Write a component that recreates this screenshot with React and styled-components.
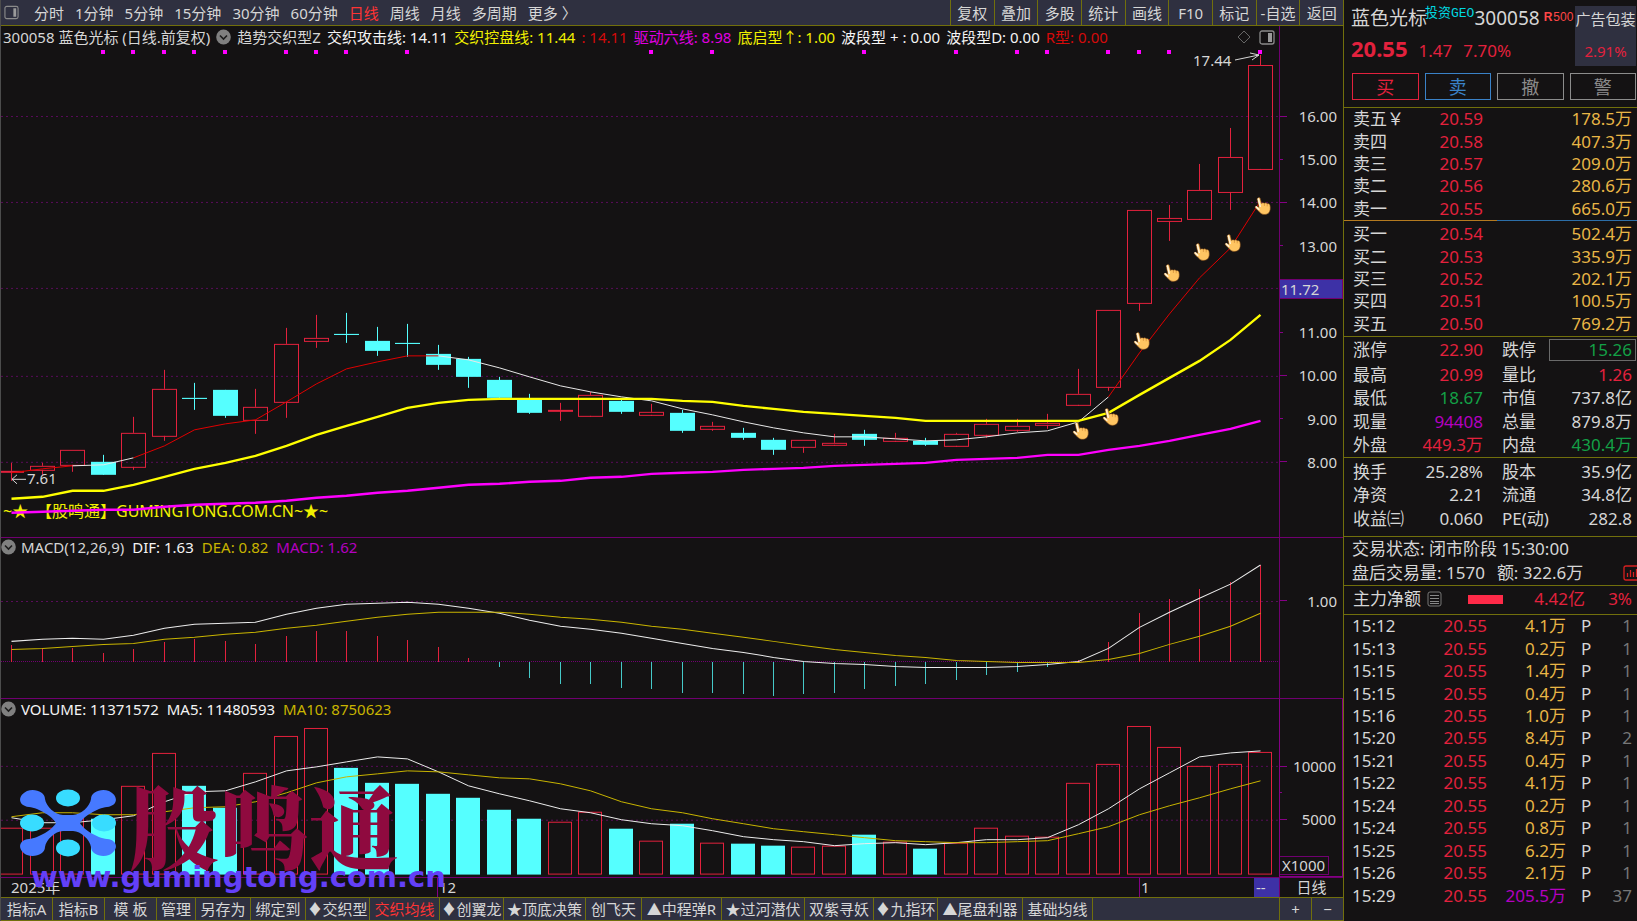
import React from "react";
import styled, { createGlobalStyle, css } from "styled-components";

const c = {
  bg: "#141213",
  bar: "#2f3040",
  olive: "#716f0c",
  purple: "#700070",
  grid: "#5a0c5a",
  text: "#d6d6d6",
  white: "#f4f4f4",
  red: "#e3213d",
  pureRed: "#d40a0a",
  green: "#13a046",
  gold: "#e9b646",
  yellow: "#ffff00",
  darkYellow: "#c8b400",
  magenta: "#ff00ff",
  violet: "#b400c0",
  cyan: "#55ffff",
  blue: "#3a82c8",
  badge: "#3d31a6",
};

const GlobalStyle = createGlobalStyle`
  * { box-sizing: border-box; }
  html, body { margin: 0; height: 100%; background: ${c.bg}; }
  #root { height: 100%; }
  body {
    font-family: "Noto Sans", "Noto Sans CJK SC", sans-serif;
    font-size: 15px;
    line-height: 20px;
    color: ${c.text};
    overflow: hidden;
  }
  button { font: inherit; color: inherit; background: none; border: 0; padding: 0; margin: 0; cursor: pointer; white-space: nowrap; }
`;

const Screen = styled.div`
  display: flex;
  height: 100vh;
`;

const Workspace = styled.main`
  position: relative;
  display: flex;
  flex-direction: column;
  flex: 1;
  min-width: 0;
  border-left: 1px solid #4c4c4c;
`;

/* top tool bar */

const Toolbar = styled.header`
  display: flex;
  flex: 0 0 26px;
  justify-content: space-between;
  background: ${c.bar};
  border-bottom: 1px solid ${c.olive};
`;

const Periods = styled.nav`
  display: flex;
  align-items: center;
  gap: 11px;
  padding-left: 3px;
  white-space: nowrap;
`;

const PeriodButton = styled.button`
  color: ${(p) => (p.$active ? "#ff3434" : c.text)};
`;

const MenuIcon = styled.svg`
  margin-right: 4px;
`;

const Tools = styled.div`
  display: grid;
  grid-template-columns: repeat(9, 1fr);
  flex: 0 0 393px;
`;

const ToolButton = styled.button`
  border-left: 1px solid ${c.olive};
  overflow: hidden;
`;

/* chart panes */

const Pane = styled.section`
  display: flex;
  flex: ${(p) => p.$share} 1 0;
  min-height: 0;
  ${(p) => p.$line && css`border-bottom: 1px solid ${c.purple};`}
`;

const Plot = styled.div`
  display: flex;
  flex-direction: column;
  flex: 1;
  min-width: 0;
`;

const Legend = styled.div`
  display: flex;
  align-items: center;
  gap: 6px;
  flex: 0 0 22px;
  padding: 0 4px 0 2px;
  line-height: 18px;
  white-space: nowrap;
`;

const SubLegend = styled(Legend)`
  gap: 8px;
  flex-basis: ${(p) => p.$height}px;
  padding-left: 0;
  svg { margin-right: -3px; }
`;

const Series = styled.span`
  color: ${(p) => p.$color || c.text};
`;

const LegendTools = styled.div`
  display: flex;
  align-items: center;
  gap: 8px;
  margin-left: auto;
`;

const Chart = styled.svg`
  display: block;
  flex: 1 1 0;
  width: 100%;
  min-height: 0;
  font-size: 15px;
`;

const SiteText = styled.text`
  font-size: 16px;
  fill: #f0f000;
`;

const Axis = styled.div`
  display: flex;
  flex-direction: column;
  flex: 0 0 64px;
  border-left: 1px solid ${c.purple};
`;

const PriceAxis = styled(Axis)`
  justify-content: space-between;
  padding: 80px 0 65px;
`;

const MacdAxis = styled(Axis)`
  padding-top: 53px;
`;

const VolumeAxis = styled(Axis)`
  gap: 16px;
  padding: 57px 0 1px;
  border: 1px solid #850085;
  border-top: 0;
`;

const AxisLabel = styled.div`
  display: flex;
  align-items: center;
  justify-content: space-between;
  padding-right: 6px;
  &::before {
    content: "";
    width: ${(p) => (p.$minor ? 3 : 7)}px;
    height: 1px;
    background: #850085;
  }
`;

const MinorTick = styled.div`
  width: 2px;
  height: 1px;
  background: #850085;
`;

const PriceBadge = styled.div`
  padding-left: 1px;
  background: ${c.badge};
  border: 1px solid ${c.purple};
  border-left: 0;
  line-height: 18px;
`;

const UnitBox = styled.div`
  align-self: flex-start;
  margin-top: auto;
  padding: 0 3px 0 2px;
  border: 1px solid ${c.purple};
  border-left: 0;
  line-height: 17px;
`;

const DateRow = styled.div`
  display: grid;
  grid-template-columns: 436fr 702fr 115fr 25px 64px;
  flex: 0 0 20px;
  border-top: 1px solid ${c.purple};
  line-height: 18px;
`;

const DateCell = styled.div`
  padding-left: ${(p) => (p.$first ? 10 : 1)}px;
  border-left: ${(p) => (p.$first ? 0 : 1)}px solid #850085;
`;

const CursorCell = styled.div`
  padding-left: 2px;
  background: ${c.badge};
`;

const PeriodCell = styled.div`
  border-left: 1px solid ${c.purple};
  text-align: center;
`;

/* bottom tabs */

const TabBar = styled.footer`
  display: flex;
  flex: 0 0 24px;
  background: ${c.bar};
  border-top: 1px solid ${c.olive};
  border-bottom: 1px solid ${c.olive};
`;

const Tab = styled.button`
  flex: 0 0 ${(p) => p.$width}px;
  border-right: 1px solid ${c.olive};
  color: ${(p) => (p.$active ? "#ff3434" : c.text)};
  overflow: hidden;
`;

const ZoomButtons = styled.div`
  display: grid;
  grid-template-columns: 1fr 1fr;
  flex: 0 0 64px;
  margin-left: auto;
`;

const ZoomButton = styled.button`
  border-left: 1px solid ${c.olive};
`;

/* watermark laid over the volume pane */

const Watermark = styled.div`
  position: absolute;
  left: 18px;
  bottom: 26px;
  pointer-events: none;
`;

const WatermarkBrand = styled.div`
  display: flex;
  align-items: center;
  gap: 12px;
  height: 72px;
`;

const WatermarkName = styled.span`
  font-family: "Noto Serif CJK SC", "Noto Sans CJK SC", serif;
  font-size: 90px;
  font-weight: 900;
  line-height: 72px;
  color: #8f0a3f;
`;

const WatermarkSite = styled.div`
  padding-left: 12px;
  font-family: "DejaVu Sans", sans-serif;
  font-size: 29px;
  font-weight: 700;
  line-height: 36px;
  color: #6340f8;
`;

/* quote panel */

const Quote = styled.aside`
  flex: 0 0 294px;
  border-left: 1px solid ${c.olive};
  font-size: 17px;
  line-height: 22px;
  overflow: hidden;
`;

const Block = styled.section`
  border-bottom: 1px solid ${c.olive};
`;

const QuoteHead = styled(Block)`
  height: 108px;
  padding: 6px 1px 0 8px;
`;

const HeadTop = styled.div`
  display: flex;
  justify-content: space-between;
  height: 60px;
`;

const HeadInfo = styled.div`
  flex: 1;
  min-width: 0;
  margin-left: -1px;
`;

const NameLine = styled.div`
  display: flex;
  height: 26px;
  font-size: 19px;
  line-height: 24px;
  white-space: nowrap;
`;

const Topic = styled.span`
  margin-left: -2px;
  font-family: "Liberation Mono", "Noto Sans CJK SC", monospace;
  font-size: 13px;
  line-height: 16px;
  color: #00d8e0;
`;

const Flag = styled.span`
  margin-left: ${(p) => (p.$bold ? 4 : 1)}px;
  font-family: "Liberation Sans", sans-serif;
  font-size: 12px;
  font-weight: ${(p) => (p.$bold ? 700 : 400)};
  line-height: 22px;
  color: #ff4646;
`;

const PriceLine = styled.div`
  display: flex;
  align-items: baseline;
  gap: 11px;
  padding-top: 3px;
  line-height: 26px;
  color: ${c.red};
`;

const LastPrice = styled.strong`
  font-size: 22px;
`;

const Sector = styled.div`
  display: flex;
  flex-direction: column;
  justify-content: space-between;
  flex: 0 0 61px;
  padding: 2px 0 4px;
  background: ${c.bar};
  font-size: 15px;
  text-align: center;
  white-space: nowrap;
`;

const SectorChange = styled.span`
  color: ${c.red};
`;

const Actions = styled.div`
  display: grid;
  grid-template-columns: repeat(4, 1fr);
  gap: 6px;
  padding-top: 7px;
`;

const ActionButton = styled.button`
  height: 27px;
  border: 1px solid ${(p) => p.$color};
  color: ${(p) => p.$color};
  font-size: 18px;
  line-height: 22px;
`;

const SplitLine = styled.div`
  height: 1px;
  background: linear-gradient(90deg, #b47a20 0 153px, #2c6ea8 153px);
`;

const Table = styled.table`
  width: 100%;
  height: ${(p) => p.$height}px;
  border-collapse: collapse;
  table-layout: fixed;
  line-height: 20px;
  th, td { padding: 0; font-weight: 400; white-space: nowrap; }
  th { text-align: left; padding-left: ${(p) => p.$indent || 0}px; }
`;

const Col = styled.col`
  width: ${(p) => p.$w}px;
`;

const Num = styled.td`
  text-align: right;
  color: ${(p) => p.$color || c.text};
`;

const EdgeNum = styled(Num)`
  && { padding-right: 5px; }
`;

const StatLabel = styled.th`
  && { padding-left: 19px; }
`;

const Mark = styled.td`
  && { padding-left: 15px; }
`;

const Boxed = styled.div`
  margin: 0 -4px 0 6px;
  padding-right: 3px;
  border: 1px solid #6a6a6a;
  line-height: 20px;
`;

const Padded = styled.div`
  padding: ${(p) => p.$pad};
`;

const StatusLine = styled.div`
  display: flex;
  align-items: center;
  gap: 12px;
  height: 24px;
  padding-left: 8px;
  white-space: nowrap;
`;

const EdgeIcon = styled.svg`
  margin-left: auto;
`;

const FlowLine = styled.div`
  display: flex;
  align-items: center;
  height: 28px;
  padding: 0 5px 2px 9px;
  color: ${c.red};
  white-space: nowrap;
`;

const FlowLabel = styled.span`
  margin-right: 6px;
  color: ${c.text};
`;

const FlowBar = styled.div`
  width: 35px;
  height: 9px;
  margin-left: 26px;
  background: #ff2a48;
`;

const FlowValue = styled.span`
  flex: 0 0 ${(p) => p.$width}px;
  text-align: right;
`;

/* data: chart ordinates share one vertical scale, one entry per trading day */

const dayX = (i) => Math.round(11.4 + (i * 1249) / 41);

// [up, body top, body bottom, high, low]
const candles = [
  [1, 471, 472, 463, 480], [1, 466, 470, 463, 474], [1, 450, 465, 450, 471], [0, 462, 474, 455, 474],
  [1, 433, 467, 417, 469], [1, 389, 436, 370, 440], [0, 398, 398, 383, 409], [0, 390, 415, 390, 417],
  [1, 407, 420, 389, 433], [1, 344, 402, 328, 417], [1, 338, 341, 315, 347], [0, 334, 334, 313, 342],
  [0, 341, 350, 327, 355], [0, 343, 343, 324, 356], [0, 354, 364, 345, 369], [0, 359, 376, 357, 387],
  [0, 380, 397, 377, 399], [0, 400, 412, 394, 413], [1, 410, 411, 403, 420], [1, 395, 416, 392, 416],
  [0, 401, 411, 400, 413], [1, 412, 415, 404, 415], [0, 413, 430, 410, 432], [1, 426, 429, 422, 430],
  [0, 433, 437, 428, 439], [0, 440, 449, 438, 454], [1, 440, 447, 440, 452], [1, 443, 445, 434, 445],
  [0, 434, 439, 430, 445], [1, 438, 441, 433, 441], [0, 441, 444, 438, 445], [1, 434, 446, 433, 446],
  [1, 424, 435, 419, 437], [1, 426, 430, 419, 431], [1, 423, 425, 414, 428], [1, 394, 405, 369, 405],
  [1, 310, 387, 310, 390], [1, 210, 303, 210, 310], [1, 218, 221, 205, 240], [1, 190, 219, 164, 219],
  [1, 157, 192, 128, 209], [1, 65, 169, 55, 169],
];

const attack = [473, 469, 466, 465, 458, 446, 430, 424, 420, 402, 384, 369, 362, 356, 356, 360, 368, 377, 386, 392, 397, 401, 409, 415, 422, 428, 433, 437, 437, 439, 441, 440, 437, 433, 431, 422, 397, 353, 314, 278, 248, 201];
const control = [499, 497, 491, 491, 485, 477, 469, 463, 456, 446, 435, 426, 417, 408, 403, 400, 399, 399, 399, 399, 399, 399, 401, 402, 406, 409, 412, 414, 416, 418, 421, 421, 421, 421, 421, 421, 413, 395, 378, 361, 340, 315];
const sixth = [513, 512, 511, 510, 510, 507, 505, 504, 503, 501, 498, 496, 493, 491, 488, 485, 484, 482, 481, 478, 477, 474, 473, 472, 470, 469, 468, 466, 465, 464, 463, 460, 459, 458, 455, 455, 450, 446, 441, 435, 429, 421];
const signals = [3, 4, 5, 6, 7, 9, 10, 11, 13, 21, 23, 28, 31, 33, 34, 36, 37, 38, 41];
const hands = [[35, 431], [36, 417], [37, 341], [38, 273], [39, 252], [40, 243], [41, 206]];

const dif = [641, 639, 638, 639, 635, 628, 624, 623, 622, 614, 608, 604, 603, 602, 604, 608, 613, 620, 626, 629, 633, 638, 643, 648, 652, 657, 661, 663, 664, 666, 667, 667, 667, 666, 664, 661, 648, 627, 612, 598, 584, 565];
const dea = [649, 648, 646, 644, 643, 639, 637, 634, 632, 628, 625, 621, 617, 614, 612, 612, 612, 614, 617, 619, 622, 626, 629, 633, 637, 641, 645, 649, 652, 655, 657, 660, 661, 662, 662, 662, 659, 653, 644, 636, 626, 613];
const macd = [645, 648, 648, 653, 649, 642, 639, 641, 644, 636, 631, 631, 636, 640, 647, 658, 667, 677, 683, 683, 687, 688, 692, 692, 693, 695, 693, 692, 688, 685, 683, 679, 674, 671, 667, 660, 642, 613, 599, 589, 582, 565];

const volume = [828, 828, 817, 819, 786, 753, 786, 808, 773, 736, 728, 768, 783, 784, 794, 798, 810, 819, 822, 812, 829, 841, 824, 843, 844, 846, 847, 846, 835, 842, 849, 843, 828, 836, 837, 783, 764, 726, 747, 766, 764, 752];
const ma5 = [818, 823, 823, 820, 816, 802, 792, 791, 782, 771, 767, 762, 757, 759, 772, 786, 794, 801, 809, 813, 820, 824, 826, 831, 837, 840, 842, 846, 844, 843, 845, 843, 840, 840, 838, 825, 809, 789, 773, 757, 753, 751];
const ma10 = [817, 813, 813, 815, 815, 812, 808, 807, 802, 793, 783, 777, 774, 771, 772, 775, 778, 779, 784, 791, 802, 809, 813, 819, 824, 829, 832, 835, 838, 841, 842, 843, 843, 842, 841, 834, 827, 815, 806, 798, 789, 781];

const periods = ["分时", "1分钟", "5分钟", "15分钟", "30分钟", "60分钟", "日线", "周线", "月线", "多周期", "更多 〉"];
const tools = ["复权", "叠加", "多股", "统计", "画线", "F10", "标记", "-自选", "返回"];
const tabs = [
  ["指标A", 52], ["指标B", 52], ["模 板", 52], ["管理", 39], ["另存为", 55], ["绑定到", 55], ["♦交织型", 64],
  ["交织均线", 70], ["♦创翼龙", 64], ["★顶底决策", 82], ["创飞天", 56], ["▲中程弹R", 80], ["★过河潜伏", 83],
  ["双紫寻妖", 69], ["♦九指环", 64], ["▲尾盘利器", 85], ["基础均线", 70],
];

const asks = [["卖五￥", "20.59", "178.5万"], ["卖四", "20.58", "407.3万"], ["卖三", "20.57", "209.0万"], ["卖二", "20.56", "280.6万"], ["卖一", "20.55", "665.0万"]];
const bids = [["买一", "20.54", "502.4万"], ["买二", "20.53", "335.9万"], ["买三", "20.52", "202.1万"], ["买四", "20.51", "100.5万"], ["买五", "20.50", "769.2万"]];

const stats = [
  ["涨停", "22.90", c.red, "跌停", "15.26", c.green, true],
  ["最高", "20.99", c.red, "量比", "1.26", c.red],
  ["最低", "18.67", c.green, "市值", "737.8亿"],
  ["现量", "94408", c.violet, "总量", "879.8万"],
  ["外盘", "449.3万", c.red, "内盘", "430.4万", c.green],
].map(([a, b, bc, d, e, ec, box]) => ({ a, b, bc, d, e, ec, box }));

const basics = [
  { a: "换手", b: "25.28%", d: "股本", e: "35.9亿" },
  { a: "净资", b: "2.21", d: "流通", e: "34.8亿" },
  { a: "收益㈢", b: "0.060", d: "PE(动)", e: "282.8" },
];

const trades = [
  ["15:12", "4.1万", 1], ["15:13", "0.2万", 1], ["15:15", "1.4万", 1], ["15:15", "0.4万", 1], ["15:16", "1.0万", 1],
  ["15:20", "8.4万", 2], ["15:21", "0.4万", 1], ["15:22", "4.1万", 1], ["15:24", "0.2万", 1], ["15:24", "0.8万", 1],
  ["15:25", "6.2万", 1], ["15:26", "2.1万", 1], ["15:29", "205.5万", 37],
];

/* chart parts */

const Line = ({ data, from = 0, to = data.length - 1, color, width = 1 }) => (
  <polyline
    fill="none"
    stroke={color}
    strokeWidth={width}
    points={data.slice(from, to + 1).map((y, k) => `${dayX(from + k) + 0.5},${y}`).join(" ")}
  />
);

const GridLine = ({ y, dash = "2 3", color = c.grid }) => (
  <line x1="1" x2="1279" y1={y - 0.5} y2={y - 0.5} stroke={color} strokeDasharray={dash} shapeRendering="crispEdges" />
);

const Candle = ({ i, d: [up, top, bottom, high, low] }) => {
  const x = dayX(i);
  const color = up ? c.red : c.cyan;
  return (
    <g stroke={color} shapeRendering="crispEdges">
      <path d={`M${x + 0.5} ${high}V${up ? top : bottom}M${x + 0.5} ${bottom}V${low + 1}`} />
      <rect x={x - 11.5} y={top + 0.5} width="24" height={Math.max(bottom - top, 0.1)} fill={up ? "none" : color} />
    </g>
  );
};

const Hand = ({ x, y }) => (
  <g transform={`translate(${x} ${y})`}>
    <path
      d="M-5 -8C-3.8 -8.8 -2.8 -8 -2.6 -7L-1.6 -2.6C-.6 -3.4 .8 -3.4 1.4 -2.6C2.4 -3.4 3.6 -3.2 4.2 -2.2C5.4 -2.8 6.8 -2 7 -.6C7.6 2 7.6 5 5.6 7.2C3 9.2 -.8 8.8 -2.6 7C-4.6 5 -6.6 3.4 -7.8 1.6C-8 0 -6.4 -.4 -4.6 1.4L-4.2 .6L-5.8 -6.4C-6 -7.2 -5.6 -7.8 -5 -8Z"
      fill="#ffc562"
      stroke="#6b3a12"
      strokeWidth=".6"
    />
    <path d="M-4.6 -7L-2.8 .4M-6.8 1L-4.2 3.4" stroke="#fff2d8" strokeWidth="1.6" strokeLinecap="round" />
    <path d="M1.4 -2.4V0M4.2 -2V.4" stroke="#d08a34" strokeWidth=".7" />
  </g>
);

const Toggle = () => (
  <svg width="15" height="16" viewBox="0 0 15 16" aria-hidden="true">
    <ellipse cx="7.5" cy="8" rx="7.3" ry="7.5" fill="#808080" />
    <path d="M4 6.5L7.5 10L11 6.5" fill="none" stroke="#1c1c1c" strokeWidth="1.6" />
  </svg>
);

const PanelIcon = () => (
  <svg width="16" height="15" viewBox="0 0 16 15" aria-hidden="true">
    <rect x="1" y="1" width="14" height="13" rx="2" fill="none" stroke="#8a8a8a" strokeWidth="1.3" />
    <rect x="9" y="3" width="4" height="9" fill="#9a9a9a" />
  </svg>
);

const Logo = () => (
  <svg width="98" height="68" viewBox="0 0 98 68" aria-hidden="true">
    <path
      d="M8 2C16 -1 26 3 26 10C27 17 36 26 44 26H54C62 26 71 17 72 10C72 3 82 -1 90 2C100 7 99 17 88 18C78 19 64 28 61 34C64 40 78 49 88 50C99 51 100 61 90 66C82 69 72 65 72 58C71 51 62 42 54 42H44C36 42 27 51 26 58C26 65 16 69 8 66C-2 61 -1 51 10 50C20 49 34 40 37 34C34 28 20 19 10 18C-1 17 -2 7 8 2Z"
      fill="#4679ff"
    />
    <g fill="#38dcff">
      <ellipse cx="49" cy="9" rx="12" ry="8.5" />
      <ellipse cx="49" cy="59" rx="12" ry="8.5" />
      <ellipse cx="13" cy="34" rx="12" ry="8.5" />
      <ellipse cx="85" cy="34" rx="12" ry="8.5" />
    </g>
  </svg>
);

const OrderTable = ({ rows }) => (
  <Table $height={112} $indent={9}>
    <colgroup><Col $w={75} /><Col $w={64} /><Col /></colgroup>
    <tbody>
      {rows.map(([label, price, amount]) => (
        <tr key={label}>
          <th scope="row">{label}</th>
          <Num $color={c.red}>{price}</Num>
          <EdgeNum $color={c.gold}>{amount}</EdgeNum>
        </tr>
      ))}
    </tbody>
  </Table>
);

const StatTable = ({ rows, height }) => (
  <Table $height={height} $indent={9}>
    <colgroup><Col $w={66} /><Col $w={73} /><Col $w={60} /><Col /></colgroup>
    <tbody>
      {rows.map((r) => (
        <tr key={r.a}>
          <th scope="row">{r.a}</th>
          <Num $color={r.bc}>{r.b}</Num>
          <StatLabel scope="row">{r.d}</StatLabel>
          <EdgeNum $color={r.ec}>{r.box ? <Boxed>{r.e}</Boxed> : r.e}</EdgeNum>
        </tr>
      ))}
    </tbody>
  </Table>
);

export default function App() {
  return (
    <>
      <GlobalStyle />
      <Screen>
        <Workspace>
          <Toolbar>
            <Periods>
              <MenuIcon width="15" height="15" viewBox="0 0 16 15" aria-hidden="true">
                <rect x="1" y="1" width="14" height="13" rx="2" fill="none" stroke="#8a8a8a" strokeWidth="1.2" />
                <rect x="10" y="3" width="3" height="9" fill="#9a9a9a" />
              </MenuIcon>
              {periods.map((p) => <PeriodButton key={p} $active={p === "日线"}>{p}</PeriodButton>)}
            </Periods>
            <Tools>{tools.map((t) => <ToolButton key={t}>{t}</ToolButton>)}</Tools>
          </Toolbar>

          <Pane $share={512} $line>
            <Plot>
              <Legend>
                <Series>300058 蓝色光标 (日线.前复权)</Series>
                <Toggle />
                <Series>趋势交织型Z</Series>
                <Series $color={c.white}>交织攻击线: 14.11</Series>
                <Series $color="#f0f000">交织控盘线: 11.44</Series>
                <Series $color={c.pureRed}>: 14.11</Series>
                <Series $color="#e000e0">驱动六线: 8.98</Series>
                <Series $color="#f0f000">底启型↑: 1.00</Series>
                <Series $color={c.white}>波段型 + : 0.00</Series>
                <Series $color={c.white}>波段型D: 0.00</Series>
                <Series $color={c.pureRed}>R型: 0.00</Series>
                <LegendTools>
                  <svg width="14" height="14" viewBox="0 0 14 14" aria-hidden="true">
                    <path d="M7 1L13 7L7 13L1 7Z" fill="none" stroke="#666" />
                  </svg>
                  <PanelIcon />
                </LegendTools>
              </Legend>
              <Chart viewBox="1 48 1278 489" preserveAspectRatio="none">
                {[117, 203, 289, 377, 463].map((y) => <GridLine key={y} y={y} />)}
                {candles.map((d, i) => <Candle key={i} i={i} d={d} />)}
                <SiteText x="3" y="517">~★　【股鸣通】GUMINGTONG.COM.CN~★~</SiteText>
                <Line data={sixth} color={c.magenta} width={2.4} />
                <Line data={attack} to={2} color="#e00000" />
                <Line data={attack} from={2} to={4} color="#e8e8e8" />
                <Line data={attack} from={4} to={14} color="#e00000" />
                <Line data={attack} from={14} to={36} color="#e8e8e8" />
                <Line data={attack} from={36} color="#e00000" />
                <Line data={control} color={c.yellow} width={2.4} />
                {signals.map((i) => <rect key={i} x={dayX(i) - 2} y="50" width="4" height="4" fill={c.magenta} />)}
                <text x="1193" y="66" fill={c.text}>17.44</text>
                <path d="M1235 60L1259 55M1250 53L1259 55L1252 60" fill="none" stroke={c.text} />
                <text x="27" y="484" fill={c.text}>7.61</text>
                <path d="M12 479.5H26M17 475L12 479.5L17 484" fill="none" stroke={c.text} />
                {hands.map(([i, y]) => <Hand key={i} x={dayX(i) + 3} y={y} />)}
              </Chart>
            </Plot>
            <PriceAxis>
              <AxisLabel>16.00</AxisLabel>
              <AxisLabel $minor>15.00</AxisLabel>
              <AxisLabel>14.00</AxisLabel>
              <AxisLabel $minor>13.00</AxisLabel>
              <PriceBadge>11.72</PriceBadge>
              <AxisLabel $minor>11.00</AxisLabel>
              <AxisLabel>10.00</AxisLabel>
              <AxisLabel $minor>9.00</AxisLabel>
              <AxisLabel>8.00</AxisLabel>
            </PriceAxis>
          </Pane>

          <Pane $share={161} $line>
            <Plot>
              <SubLegend $height={18}>
                <Toggle />
                <Series>MACD(12,26,9)</Series>
                <Series $color={c.white}>DIF: 1.63</Series>
                <Series $color={c.darkYellow}>DEA: 0.82</Series>
                <Series $color={c.violet}>MACD: 1.62</Series>
              </SubLegend>
              <Chart viewBox="1 556 1278 142" preserveAspectRatio="none">
                <GridLine y={602} />
                <GridLine y={662} dash="1 1" color={c.purple} />
                {macd.map((y, i) => (
                  <path key={i} d={`M${dayX(i) + 0.5} 662V${y}`} stroke={y < 662 ? c.red : "#45c8c8"} shapeRendering="crispEdges" />
                ))}
                <Line data={dif} color="#ececec" />
                <Line data={dea} color={c.darkYellow} />
              </Chart>
            </Plot>
            <MacdAxis><AxisLabel>1.00</AxisLabel></MacdAxis>
          </Pane>

          <Pane $share={178}>
            <Plot>
              <SubLegend $height={20}>
                <Toggle />
                <Series $color={c.white}>VOLUME: 11371572</Series>
                <Series $color={c.white}>MA5: 11480593</Series>
                <Series $color={c.darkYellow}>MA10: 8750623</Series>
              </SubLegend>
              <Chart viewBox="1 719 1278 158" preserveAspectRatio="none">
                <GridLine y={767} />
                <GridLine y={821} />
                {volume.map((y, i) => (
                  <rect
                    key={i}
                    x={dayX(i) - 11.5}
                    y={y + 0.5}
                    width="23"
                    height={874 - y}
                    fill={candles[i][0] ? "none" : c.cyan}
                    stroke={candles[i][0] ? c.red : c.cyan}
                    shapeRendering="crispEdges"
                  />
                ))}
                <Line data={ma5} color="#ececec" />
                <Line data={ma10} color={c.darkYellow} />
              </Chart>
            </Plot>
            <VolumeAxis>
              <AxisLabel>10000</AxisLabel>
              <MinorTick />
              <AxisLabel>5000</AxisLabel>
              <UnitBox>X1000</UnitBox>
            </VolumeAxis>
          </Pane>

          <DateRow>
            <DateCell $first>2025年</DateCell>
            <DateCell>12</DateCell>
            <DateCell>1</DateCell>
            <CursorCell>--</CursorCell>
            <PeriodCell>日线</PeriodCell>
          </DateRow>

          <TabBar>
            {tabs.map(([label, width]) => (
              <Tab key={label} $width={width} $active={label === "交织均线"}>{label}</Tab>
            ))}
            <ZoomButtons>
              <ZoomButton>+</ZoomButton>
              <ZoomButton>−</ZoomButton>
            </ZoomButtons>
          </TabBar>

          <Watermark>
            <WatermarkBrand>
              <Logo />
              <WatermarkName>股鸣通</WatermarkName>
            </WatermarkBrand>
            <WatermarkSite>www.gumingtong.com.cn</WatermarkSite>
          </Watermark>
        </Workspace>

        <Quote>
          <QuoteHead>
            <HeadTop>
              <HeadInfo>
                <NameLine>
                  <span>蓝色光标</span>
                  <Topic>投资GEO</Topic>
                  <span>300058</span>
                  <Flag $bold>R</Flag>
                  <Flag>500</Flag>
                </NameLine>
                <PriceLine>
                  <LastPrice>20.55</LastPrice>
                  <span>1.47</span>
                  <span>7.70%</span>
                </PriceLine>
              </HeadInfo>
              <Sector>
                <span>广告包装</span>
                <SectorChange>2.91%</SectorChange>
              </Sector>
            </HeadTop>
            <Actions>
              <ActionButton $color={c.red}>买</ActionButton>
              <ActionButton $color={c.blue}>卖</ActionButton>
              <ActionButton $color="#8c8c8c">撤</ActionButton>
              <ActionButton $color="#8c8c8c">警</ActionButton>
            </Actions>
          </QuoteHead>

          <Block>
            <OrderTable rows={asks} />
            <SplitLine />
            <Padded $pad="2px 0 1px">
              <OrderTable rows={bids} />
            </Padded>
          </Block>

          <Block><StatTable rows={stats} height={120} /></Block>
          <Block>
            <Padded $pad="2px 0 5px">
              <StatTable rows={basics} height={71} />
            </Padded>
          </Block>

          <Block>
            <StatusLine><span>交易状态: 闭市阶段 15:30:00</span></StatusLine>
            <StatusLine>
              <span>盘后交易量: 1570</span>
              <span>额: 322.6万</span>
              <EdgeIcon width="14" height="16" viewBox="0 0 14 16" aria-hidden="true">
                <path d="M14 1H3Q1 1 1 3V13Q1 15 3 15H14M4.500 12V8M7.500 12V5M10.500 12V7M13.500 12V4" fill="none" stroke="#d82020" strokeWidth="1.3" />
              </EdgeIcon>
            </StatusLine>
          </Block>

          <Block>
            <FlowLine>
              <FlowLabel>主力净额</FlowLabel>
              <svg width="15" height="16" viewBox="0 0 15 16" aria-hidden="true">
                <rect x="1" y="1" width="13" height="14" rx="2" fill="none" stroke="#777" />
                <path d="M3 4.500H12M3 7.500H12M3 10.500H12M3 12.500H12" stroke="#888" />
              </svg>
              <FlowBar />
              <FlowValue $width={82}>4.42亿</FlowValue>
              <FlowValue $width={47}>3%</FlowValue>
            </FlowLine>
          </Block>

          <Table $height={292} $indent={8}>
            <colgroup><Col $w={70} /><Col $w={73} /><Col $w={79} /><Col $w={30} /><Col /></colgroup>
            <tbody>
              {trades.map(([time, amount, count], i) => (
                <tr key={i}>
                  <th scope="row">{time}</th>
                  <Num $color={c.red}>20.55</Num>
                  <Num $color={count > 30 ? c.violet : c.gold}>{amount}</Num>
                  <Mark>P</Mark>
                  <EdgeNum $color="#777">{count}</EdgeNum>
                </tr>
              ))}
            </tbody>
          </Table>
        </Quote>
      </Screen>
    </>
  );
}
